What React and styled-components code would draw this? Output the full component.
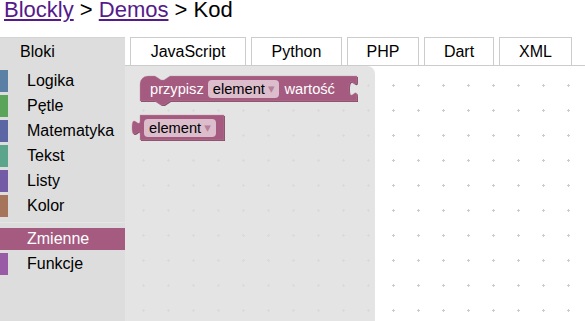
import React from "react"
import styled, { createGlobalStyle } from "styled-components"

const Global = createGlobalStyle`
    html, body {
        margin: 0;
        padding: 0;
        overflow: hidden;
        background: #fff;
        font-family: "Liberation Sans", Arial, sans-serif;
    }
`

const Page = styled.div`
    display: flex;
    flex-direction: column;
    height: 100vh;
`
const Crumbs = styled.h1`
    margin: 0;
    padding-left: 4px;
    font-size: 22px;
    font-weight: normal;
    line-height: 20px;
    color: #000;
`
const Crumb = styled.a`
    color: #551a8b;
    text-decoration: underline;
`
const TabBar = styled.div`
    display: flex;
    margin-top: 17px;
    height: 29px;
`
const BlocksTab = styled.div`
    width: 125px;
    padding-left: 20px;
    box-sizing: border-box;
    display: flex;
    align-items: center;
    background: #ddd;
    border-top: 1px solid #d4d4d4;
    font-size: 16px;
`
const TabGroup = styled.div`
    flex: 1;
    display: flex;
    gap: 5px;
    padding-left: 5px;
    border-bottom: 1px solid #ccc;
`
const Tab = styled.div`
    width: ${p => p.w}px;
    box-sizing: border-box;
    display: flex;
    align-items: center;
    justify-content: center;
    border: 1px solid #ccc;
    border-bottom: none;
    background: #fff;
    font-size: 16px;
`
const Workspace = styled.div`
    flex: 1;
    display: flex;
    position: relative;
    overflow: hidden;
`
const Grid = styled.svg`
    position: absolute;
    left: 0;
    top: 0;
    width: 100%;
    height: 100%;
`
const Toolbox = styled.div`
    position: relative;
    z-index: 1;
    width: 125px;
    padding: 4px 0;
    background: #ddd;
`
const Row = styled.div`
    height: 22px;
    margin-bottom: 3px;
    border-left: 8px solid ${p => p.color};
    padding-left: 19px;
    display: flex;
    align-items: center;
    font-size: 16px;
    color: ${p => (p.selected ? "#fff" : "#000")};
    background: ${p => (p.selected ? p.color : "transparent")};
`
const Separator = styled.div`
    height: 0;
    margin: 5px 0;
    border-bottom: 1px solid #e5e5e5;
`
const Flyout = styled.div`
    position: relative;
    z-index: 1;
    width: 250px;
    background: rgba(221, 221, 221, 0.8);
    border-top-right-radius: 8px;
`
const Block = styled.div`
    position: absolute;
    left: ${p => p.x}px;
    top: ${p => p.y}px;
    width: ${p => p.w}px;
    height: 25px;
`
const Shape = styled.svg`
    position: absolute;
    left: 0;
    top: 0;
    overflow: visible;
`
const BlockBody = styled.div`
    position: relative;
    height: 100%;
    display: flex;
    align-items: center;
    gap: ${p => p.gap || 4}px;
    padding-left: ${p => p.pad}px;
    font-size: 11pt;
    color: #fff;
    white-space: nowrap;
`
const Dropdown = styled.div`
    height: 18px;
    display: flex;
    align-items: center;
    padding: 0 5px 0 5px;
    border-radius: 4px;
    background: rgba(255, 255, 255, 0.6);
    color: #000;
`
const Arrow = styled.span`
    margin-left: 3px;
    font-family: "DejaVu Sans", sans-serif;
    font-size: 13px;
    line-height: 1;
    color: #b7809b;
`
const Label = styled.span`
    margin-left: ${p => p.offset || 0}px;
`

const categories = [
    { name: "Logika", color: "#5b80a5" },
    { name: "Pętle", color: "#5ba55b" },
    { name: "Matematyka", color: "#5b67a5" },
    { name: "Tekst", color: "#5ba58c" },
    { name: "Listy", color: "#745ba5" },
    { name: "Kolor", color: "#a5745b" },
]

const tabs = [
    { name: "JavaScript", w: 116 },
    { name: "Python", w: 91 },
    { name: "PHP", w: 72 },
    { name: "Dart", w: 70 },
    { name: "XML", w: 73 },
]

const statementPath =
    "M0,8 A8,8 0 0,1 8,0 H15 l6,4 3,0 6,-4 H217 v5 c0,10 -8,-8 -8,7.5 s8,-2.5 8,7.5 V25 H30 l-6,4 -3,0 -6,-4 H0 Z"
const outputPath = "M0,0 H84 V25 H0 V20 c0,-10 -8,8 -8,-7.5 s8,2.5 8,-7.5 Z"

const BlockShape = ({ d, w }) => (
    <Shape width={w} height={25}>
        <path d={d} fill="#844966" transform="translate(1,1)" />
        <path d={d} fill="#a55b80" />
        <path d={d} fill="none" stroke="#c08ca6" strokeWidth="0.6" opacity="0.6" />
    </Shape>
)

const App = () => {
    return (
        <Page>
            <Global />
            <Crumbs>
                <Crumb href="#">Blockly</Crumb> &gt; <Crumb href="#">Demos</Crumb> &gt; Kod
            </Crumbs>
            <TabBar>
                <BlocksTab>Bloki</BlocksTab>
                <TabGroup>
                    {tabs.map(t => (
                        <Tab key={t.name} w={t.w}>{t.name}</Tab>
                    ))}
                </TabGroup>
            </TabBar>
            <Workspace>
                <Grid>
                    <defs>
                        <pattern id="grid" width="25" height="25" patternUnits="userSpaceOnUse">
                            <path d="M17,19.5 h3 M18.5,18 v3" stroke="#ccc" strokeWidth="1" />
                        </pattern>
                    </defs>
                    <rect width="100%" height="100%" fill="url(#grid)" />
                </Grid>
                <Toolbox>
                    {categories.map(c => (
                        <Row key={c.name} color={c.color}>{c.name}</Row>
                    ))}
                    <Separator />
                    <Row color="#a55b80" selected>Zmienne</Row>
                    <Row color="#995ba5">Funkcje</Row>
                </Toolbox>
                <Flyout>
                    <Block x={15} y={10} w={217}>
                        <BlockShape d={statementPath} w={217} />
                        <BlockBody pad={10}>
                            <Label>przypisz</Label>
                            <Dropdown>element<Arrow>▾</Arrow></Dropdown>
                            <Label offset={1}>wartość</Label>
                        </BlockBody>
                    </Block>
                    <Block x={15} y={49} w={84}>
                        <BlockShape d={outputPath} w={84} />
                        <BlockBody pad={4}>
                            <Dropdown>element<Arrow>▾</Arrow></Dropdown>
                        </BlockBody>
                    </Block>
                </Flyout>
            </Workspace>
        </Page>
    )
}

export default App
